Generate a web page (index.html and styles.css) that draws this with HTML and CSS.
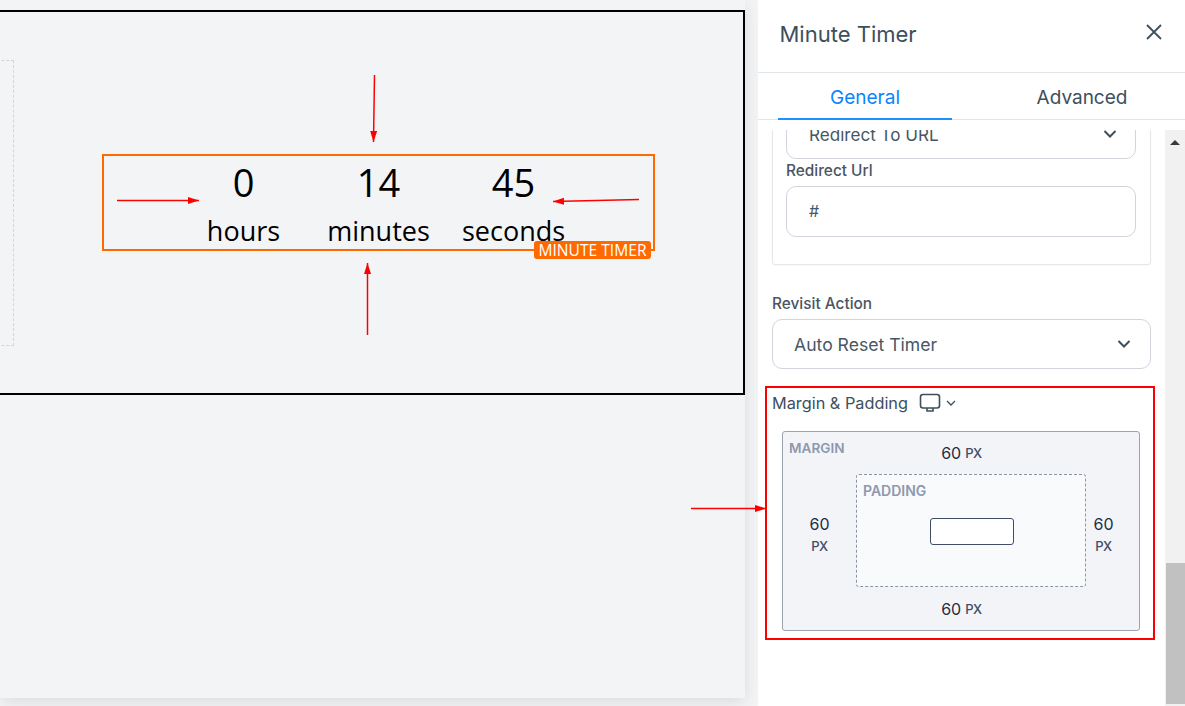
FILE: index.html
```html
<!DOCTYPE html>
<html lang="en">
<head>
<meta charset="utf-8">
<title>Minute Timer</title>
<link rel="stylesheet" href="styles.css">
</head>
<body>
<main class="canvas">
  <div class="page">
    <section class="frame">
      <div class="ghost"></div>
      <div class="timer">
        <div class="cell"><span class="num">0</span><span class="unit">hours</span></div>
        <div class="cell"><span class="num">14</span><span class="unit">minutes</span></div>
        <div class="cell"><span class="num">45</span><span class="unit">seconds</span></div>
        <span class="badge">MINUTE TIMER</span>
      </div>
    </section>
  </div>
</main>
<aside class="panel">
  <header class="panel-head">
    <h1>Minute Timer</h1>
    <svg class="close" width="20" height="20" viewBox="0 0 20 20"><path d="M3 3 L17 17 M17 3 L3 17"/></svg>
  </header>
  <nav class="tabs">
    <div class="tab active">General</div>
    <div class="tab">Advanced</div>
  </nav>
  <div class="scroll">
    <div class="content">
      <div class="card">
        <div class="select small clipped"><span>Redirect To URL</span>
          <svg class="chev" width="16" height="16" viewBox="0 0 16 16"><path d="M2.5 5 L8 10.5 L13.5 5"/></svg>
        </div>
        <label class="label tight">Redirect Url</label>
        <div class="input">#</div>
      </div>
      <label class="label revisit">Revisit Action</label>
      <div class="select"><span>Auto Reset Timer</span>
        <svg class="chev" width="16" height="16" viewBox="0 0 16 16"><path d="M2.5 5 L8 10.5 L13.5 5"/></svg>
      </div>
      <div class="mp-head">
        <span>Margin &amp; Padding</span>
        <svg class="monitor" width="22" height="20" viewBox="0 0 22 20"><rect x="1.5" y="1.5" width="19" height="13.5" rx="2.5"/><path d="M8 15 V18 H14 V15"/></svg>
        <svg class="mini" width="10" height="10" viewBox="0 0 10 10"><path d="M1 3 L5 7 L9 3"/></svg>
      </div>
      <div class="margin-box">
        <span class="box-tag">MARGIN</span>
        <div class="val top"><b>60</b> <i>PX</i></div>
        <div class="val stack left"><b>60</b><i>PX</i></div>
        <div class="padding-box">
          <span class="box-tag">PADDING</span>
          <div class="inner"></div>
        </div>
        <div class="val stack right"><b>60</b><i>PX</i></div>
        <div class="val bottom"><b>60</b> <i>PX</i></div>
      </div>
    </div>
    <div class="scrollbar">
      <div class="track"><span class="up"></span></div>
      <div class="thumb"></div>
    </div>
  </div>
</aside>
<div class="highlight"></div>
<svg class="arrows" width="1185" height="706" viewBox="0 0 1185 706">
  <defs>
    <marker id="head" markerWidth="12" markerHeight="8" refX="11" refY="3.5" orient="auto" markerUnits="userSpaceOnUse"><path d="M0 0 L11 3.5 L0 7 Z" fill="#ff0000"/></marker>
  </defs>
  <path d="M374.5 75 L373.5 142" marker-end="url(#head)"/>
  <path d="M367.5 335 L367.5 263" marker-end="url(#head)"/>
  <path d="M117 200.5 L199 200.5" marker-end="url(#head)"/>
  <path d="M639 199.5 L553 201.5" marker-end="url(#head)"/>
  <path d="M691 508.5 L766 508.5" marker-end="url(#head)"/>
</svg>
</body>
</html>
```
FILE: styles.css
```css
* { box-sizing: border-box; }
html, body { margin: 0; height: 100%; }
body {
  width: 1185px;
  height: 706px;
  overflow: hidden;
  display: flex;
  position: relative;
  font-family: Inter, "Liberation Sans", sans-serif;
  background: #fff;
}
.canvas {
  width: 758px;
  height: 706px;
  background: #f3f4f6;
  overflow: hidden;
  flex: none;
}
.page {
  width: 745px;
  height: 698px;
  background: #f3f4f6;
  box-shadow: 0 4px 16px rgba(0, 0, 0, 0.1);
  padding-top: 10px;
}
.frame {
  width: 755px;
  height: 385px;
  margin-left: -10px;
  border: 2px solid #000;
  display: flex;
  align-items: center;
  justify-content: flex-start;
}
.ghost {
  width: 22px;
  height: 286px;
  border: 1px dashed #d1d5db;
  flex: none;
}
.timer {
  position: relative;
  margin-left: 88px;
  width: 553px;
  height: 97px;
  border: 2px solid #ff6a00;
  display: grid;
  grid-template-columns: repeat(3, 135px);
  justify-content: center;
  font-family: "Open Sans", sans-serif;
  color: #000;
}
.cell {
  display: flex;
  flex-direction: column;
  align-items: center;
}
.num { font-size: 38px; line-height: 50px; margin-top: 1px; }
.unit { font-size: 27px; line-height: 36px; margin-top: 6px; white-space: nowrap; }
.badge {
  position: absolute;
  right: 2px;
  bottom: -10px;
  width: 117px;
  height: 18px;
  background: #ff6a00;
  color: #fff;
  border-radius: 3px;
  font-size: 15.6px;
  line-height: 18px;
  text-align: center;
  white-space: nowrap;
}
.panel {
  width: 427px;
  height: 706px;
  flex: none;
  background: #fff;
  display: flex;
  flex-direction: column;
}
.panel-head {
  height: 73px;
  flex: none;
  border-bottom: 1px solid #e2e4e8;
  display: flex;
  align-items: flex-start;
  justify-content: space-between;
  padding: 20px 21px 0 21.5px;
}
.panel-head h1 {
  margin: 0;
  font-size: 22px;
  line-height: 29px;
  font-weight: 400;
  color: #3d4f5c;
}
.close { margin-top: 2px; }
.close path { fill: none; stroke: #3d4f5c; stroke-width: 1.8; }
.tabs {
  height: 47px;
  flex: none;
  border-bottom: 1px solid #e2e4e8;
  display: flex;
  padding-left: 20px;
}
.tab {
  width: 174px;
  height: 47px;
  flex: none;
  text-align: center;
  font-size: 19px;
  line-height: 49px;
  color: #3d4f5c;
}
.tab + .tab { margin-left: 43px; }
.tab.active {
  color: #0a84ff;
  border-bottom: 2px solid #1e90ff;
}
.scroll {
  flex: 1;
  margin-top: 10px;
  display: flex;
  min-height: 0;
}
.content {
  width: 407px;
  overflow: hidden;
  padding: 0 14px;
  flex: none;
  position: relative;
}
.card {
  display: flow-root;
  border: 1px solid #e5e7eb;
  border-top: 0;
  border-radius: 0 0 3px 3px;
  height: 135px;
  padding: 0 14px 0 13px;
  box-shadow: 0 1px 2px rgba(0, 0, 0, 0.03);
}
.select {
  height: 50px;
  border: 1px solid #d1d5db;
  border-radius: 10px;
  display: flex;
  align-items: center;
  justify-content: space-between;
  padding: 0 18px 0 21px;
  font-size: 17.6px;
  color: #465763;
}
.select.clipped {
  height: 52px;
  margin-top: -23px;
  font-size: 17.1px;
  padding: 2px 17px 0 22px;
}
.chev path { fill: none; stroke: #3d4f5c; stroke-width: 2; }
.label {
  display: block;
  font-size: 15.4px;
  font-weight: 500;
  color: #4b5563;
}
.label.tight { margin-top: 2px; line-height: 20px; }
.input {
  height: 51px;
  margin-top: 5px;
  border: 1px solid #d1d5db;
  border-radius: 10px;
  padding-left: 22px;
  font-size: 16px;
  line-height: 49px;
  color: #4b5563;
}
.label.revisit { margin-top: 29px; line-height: 20px; margin-bottom: 5px; }
.mp-head {
  margin-top: 23px;
  height: 22px;
  display: flex;
  align-items: center;
  font-size: 16.3px;
  font-weight: 400;
  color: #3d4f5c;
}
.monitor { margin-left: 11px; margin-top: -1px; }
.monitor rect, .monitor path { fill: none; stroke: #3d4f5c; stroke-width: 1.6; }
.mini { margin-left: 5px; margin-top: -1px; }
.mini path { fill: none; stroke: #3d4f5c; stroke-width: 1.3; }
.margin-box {
  position: relative;
  margin: 17px 0 0 10px;
  width: 358px;
  height: 200px;
  background: #f3f4f8;
  border: 1px solid #9ca3af;
  border-radius: 3px;
  display: grid;
  grid-template-columns: 73px 230px 53px;
  grid-template-rows: 42px 113px 43px;
  color: #1f2d45;
}
.box-tag {
  position: absolute;
  left: 6px;
  top: 8px;
  font-size: 13.6px;
  font-weight: 600;
  color: #8d99ae;
}
.padding-box .box-tag { font-size: 14px; top: 7px; }
.val { display: flex; align-items: center; justify-content: center; gap: 4px; font-size: 16px; padding-left: 1px; }
.val b { font-weight: 400; }
.val i { font-style: normal; font-size: 13px; letter-spacing: -0.4px; color: #3f4d66; font-weight: 500; }
.val.stack { flex-direction: column; gap: 4px; padding: 6px 0 0; }
.val.stack.right { padding-right: 18px; }
.val.top { grid-column: 1 / -1; }
.val.bottom { grid-column: 1 / -1; }
.padding-box {
  position: relative;
  background: #f9fafc;
  border: 1px dashed #8b94a5;
  border-radius: 3px;
  display: flex;
  align-items: center;
  justify-content: center;
}
.inner {
  width: 84px;
  height: 27px;
  background: #fff;
  border: 1px solid #3f4d66;
  border-radius: 3px;
  margin: 1px 0 0 2px;
}
.scrollbar {
  width: 20px;
  flex: none;
  background: #f1f1f1;
  display: flex;
  flex-direction: column;
  justify-content: space-between;
}
.track { height: 20px; display: flex; justify-content: center; padding-top: 10px; }
.up {
  width: 0;
  height: 0;
  border-left: 5px solid transparent;
  border-right: 5px solid transparent;
  border-bottom: 5px solid #3a3a3a;
}
.thumb { margin: 0 0 2px 1px; height: 141px; background: #c1c1c1; }
.highlight {
  position: absolute;
  left: 765px;
  top: 386px;
  width: 390px;
  height: 254px;
  border: 2px solid #ff0000;
}
.arrows {
  position: absolute;
  left: 0;
  top: 0;
  pointer-events: none;
}
.arrows path { fill: none; stroke: #ff0000; stroke-width: 1.5; }
.arrows marker path { stroke: none; fill: #ff0000; }
```
